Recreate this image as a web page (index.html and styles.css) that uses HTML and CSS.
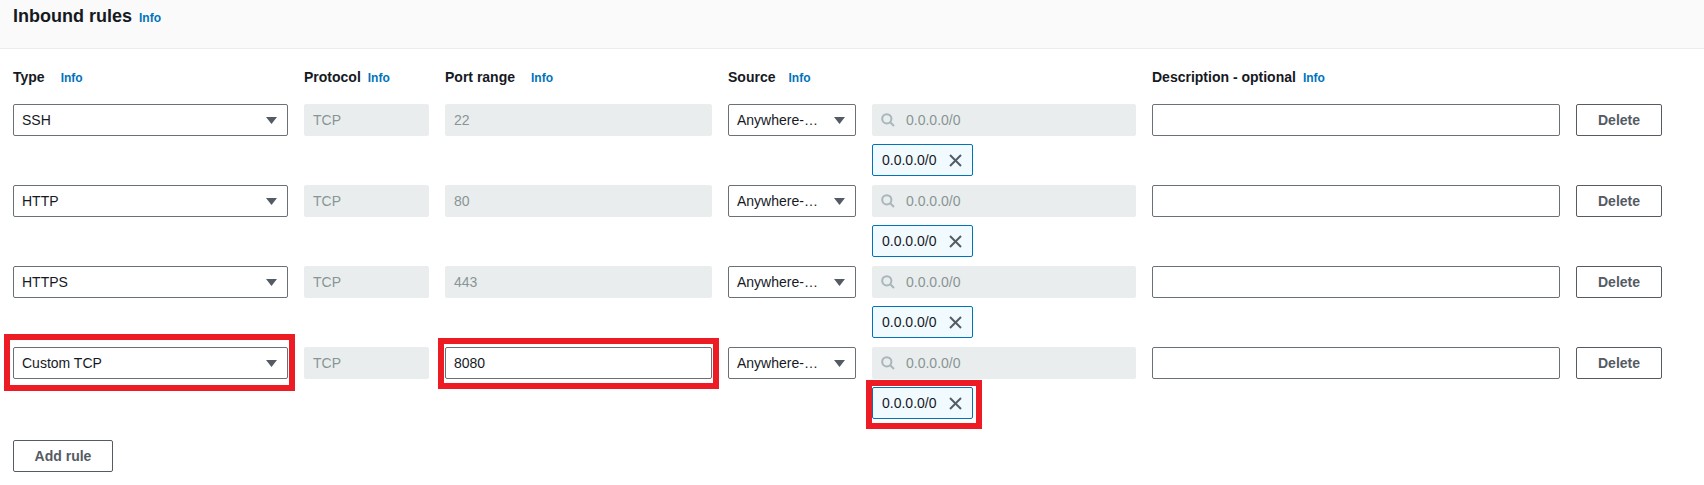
FILE: index.html
```html
<!DOCTYPE html>
<html lang="en">
<head>
<meta charset="utf-8">
<title>Inbound rules</title>
<link rel="stylesheet" href="styles.css">
</head>
<body>
<header class="panel-header">
  <h2 class="title">Inbound rules</h2><a class="info info-title">Info</a>
</header>
<main class="content">
  <div class="grid labels">
    <div class="label">Type<a class="info gap-16">Info</a></div>
    <div class="label">Protocol<a class="info gap-7">Info</a></div>
    <div class="label">Port range<a class="info gap-16">Info</a></div>
    <div class="label">Source<a class="info gap-13">Info</a></div>
    <div class="label"></div>
    <div class="label">Description - optional<a class="info gap-7">Info</a></div>
    <div class="label"></div>
  </div>

  <div class="rules">
    <div class="grid rule">
      <div class="select"><span class="select-text">SSH</span><svg class="caret" width="11" height="7" viewBox="0 0 11 7"><polygon points="0,0 11,0 5.5,7"/></svg></div>
      <div class="field disabled">TCP</div>
      <div class="field disabled">22</div>
      <div class="select"><span class="select-text">Anywhere-…</span><svg class="caret" width="11" height="7" viewBox="0 0 11 7"><polygon points="0,0 11,0 5.5,7"/></svg></div>
      <div class="source-stack">
        <div class="field disabled search"><svg class="search-icon" width="14" height="14" viewBox="0 0 14 14"><circle cx="5.8" cy="5.8" r="4.6"/><line x1="9.2" y1="9.2" x2="13" y2="13"/></svg><span>0.0.0.0/0</span></div>
        <div class="chip-row"><span class="chip">0.0.0.0/0<svg class="x-icon" width="13" height="13" viewBox="0 0 13 13"><line x1="1" y1="1" x2="12" y2="12"/><line x1="12" y1="1" x2="1" y2="12"/></svg></span></div>
      </div>
      <div class="field input"></div>
      <button class="btn">Delete</button>
    </div>

    <div class="grid rule">
      <div class="select"><span class="select-text">HTTP</span><svg class="caret" width="11" height="7" viewBox="0 0 11 7"><polygon points="0,0 11,0 5.5,7"/></svg></div>
      <div class="field disabled">TCP</div>
      <div class="field disabled">80</div>
      <div class="select"><span class="select-text">Anywhere-…</span><svg class="caret" width="11" height="7" viewBox="0 0 11 7"><polygon points="0,0 11,0 5.5,7"/></svg></div>
      <div class="source-stack">
        <div class="field disabled search"><svg class="search-icon" width="14" height="14" viewBox="0 0 14 14"><circle cx="5.8" cy="5.8" r="4.6"/><line x1="9.2" y1="9.2" x2="13" y2="13"/></svg><span>0.0.0.0/0</span></div>
        <div class="chip-row"><span class="chip">0.0.0.0/0<svg class="x-icon" width="13" height="13" viewBox="0 0 13 13"><line x1="1" y1="1" x2="12" y2="12"/><line x1="12" y1="1" x2="1" y2="12"/></svg></span></div>
      </div>
      <div class="field input"></div>
      <button class="btn">Delete</button>
    </div>

    <div class="grid rule">
      <div class="select"><span class="select-text">HTTPS</span><svg class="caret" width="11" height="7" viewBox="0 0 11 7"><polygon points="0,0 11,0 5.5,7"/></svg></div>
      <div class="field disabled">TCP</div>
      <div class="field disabled">443</div>
      <div class="select"><span class="select-text">Anywhere-…</span><svg class="caret" width="11" height="7" viewBox="0 0 11 7"><polygon points="0,0 11,0 5.5,7"/></svg></div>
      <div class="source-stack">
        <div class="field disabled search"><svg class="search-icon" width="14" height="14" viewBox="0 0 14 14"><circle cx="5.8" cy="5.8" r="4.6"/><line x1="9.2" y1="9.2" x2="13" y2="13"/></svg><span>0.0.0.0/0</span></div>
        <div class="chip-row"><span class="chip">0.0.0.0/0<svg class="x-icon" width="13" height="13" viewBox="0 0 13 13"><line x1="1" y1="1" x2="12" y2="12"/><line x1="12" y1="1" x2="1" y2="12"/></svg></span></div>
      </div>
      <div class="field input"></div>
      <button class="btn">Delete</button>
    </div>

    <div class="grid rule">
      <div class="select marked"><span class="select-text">Custom TCP</span><svg class="caret" width="11" height="7" viewBox="0 0 11 7"><polygon points="0,0 11,0 5.5,7"/></svg><span class="mark mark-type"></span></div>
      <div class="field disabled">TCP</div>
      <div class="field input filled marked">8080<span class="mark mark-port"></span></div>
      <div class="select"><span class="select-text">Anywhere-…</span><svg class="caret" width="11" height="7" viewBox="0 0 11 7"><polygon points="0,0 11,0 5.5,7"/></svg></div>
      <div class="source-stack">
        <div class="field disabled search"><svg class="search-icon" width="14" height="14" viewBox="0 0 14 14"><circle cx="5.8" cy="5.8" r="4.6"/><line x1="9.2" y1="9.2" x2="13" y2="13"/></svg><span>0.0.0.0/0</span></div>
        <div class="chip-row"><span class="chip marked">0.0.0.0/0<svg class="x-icon" width="13" height="13" viewBox="0 0 13 13"><line x1="1" y1="1" x2="12" y2="12"/><line x1="12" y1="1" x2="1" y2="12"/></svg><span class="mark mark-chip"></span></span></div>
      </div>
      <div class="field input"></div>
      <button class="btn">Delete</button>
    </div>
  </div>

  <button class="btn btn-add">Add rule</button>
</main>
</body>
</html>
```

FILE: styles.css
```css
* { box-sizing: border-box; }

body {
  margin: 0;
  background: #ffffff;
  color: #16191f;
  font-family: "Liberation Sans", Arial, sans-serif;
  font-size: 14px;
}

.panel-header {
  height: 49px;
  padding: 5px 13px 0;
  background: #fafafa;
  border-bottom: 1px solid #eaeded;
  display: flex;
  align-items: baseline;
  line-height: 22px;
}

.title {
  margin: 0;
  font-size: 18px;
  font-weight: 700;
  line-height: 22px;
  color: #16191f;
}

.info {
  font-size: 12px;
  font-weight: 700;
  color: #0073bb;
  text-decoration: none;
  cursor: pointer;
}

.info-title { margin-left: 7px; }
.gap-7 { margin-left: 7px; }
.gap-13 { margin-left: 13px; }
.gap-16 { margin-left: 16px; }

.content {
  padding: 18px 13px 0;
}

.grid {
  display: grid;
  grid-template-columns: 275px 125px 267px 128px 264px 408px 86px;
  column-gap: 16px;
}

.labels {
  margin-bottom: 16px;
}

.label {
  font-size: 14px;
  font-weight: 700;
  line-height: 20px;
  white-space: nowrap;
}

.rules {
  display: flex;
  flex-direction: column;
  gap: 9px;
}

.rule {
  align-items: start;
}

.select,
.field {
  height: 32px;
  border-radius: 2px;
  font-size: 14px;
  line-height: 30px;
  white-space: nowrap;
}

.select {
  display: flex;
  align-items: center;
  justify-content: space-between;
  padding: 0 10px 0 8px;
  border: 1px solid #687078;
  background: #ffffff;
  color: #16191f;
}

.select-text {
  overflow: hidden;
  text-overflow: ellipsis;
}

.caret {
  flex: none;
  fill: #545b64;
}

.field {
  padding: 0 8px;
}

.disabled {
  background: #eaeded;
  border: 1px solid #eaeded;
  color: #879596;
}

.input {
  background: #ffffff;
  border: 1px solid #687078;
}

.filled {
  color: #16191f;
}

.search {
  display: flex;
  align-items: center;
  gap: 11px;
}

.search-icon {
  flex: none;
  fill: none;
  stroke: #aab7b8;
  stroke-width: 2;
}

.source-stack {
  display: flex;
  flex-direction: column;
  gap: 8px;
}

.chip-row {
  display: flex;
}

.chip {
  display: inline-flex;
  align-items: center;
  gap: 12px;
  height: 32px;
  padding: 0 10px 0 9px;
  background: #f1faff;
  border: 1px solid #0073bb;
  border-radius: 2px;
  color: #16191f;
  font-size: 14px;
}

.x-icon {
  flex: none;
  stroke: #545b64;
  stroke-width: 2;
}

.btn {
  height: 32px;
  padding: 0;
  background: #ffffff;
  border: 1px solid #545b64;
  border-radius: 2px;
  color: #545b64;
  font-family: "Liberation Sans", Arial, sans-serif;
  font-size: 14px;
  font-weight: 700;
  cursor: pointer;
}

.btn-add {
  width: 100px;
  margin-top: 21px;
}

.marked {
  position: relative;
}

.mark {
  position: absolute;
  border: 6px solid #ed1c24;
  pointer-events: none;
}

.mark-type { top: -14px; left: -10px; right: -8px; bottom: -13px; }
.mark-port { top: -10px; left: -8px; right: -8px; bottom: -11px; }
.mark-chip { top: -8px; left: -7px; right: -10px; bottom: -11px; }
```
